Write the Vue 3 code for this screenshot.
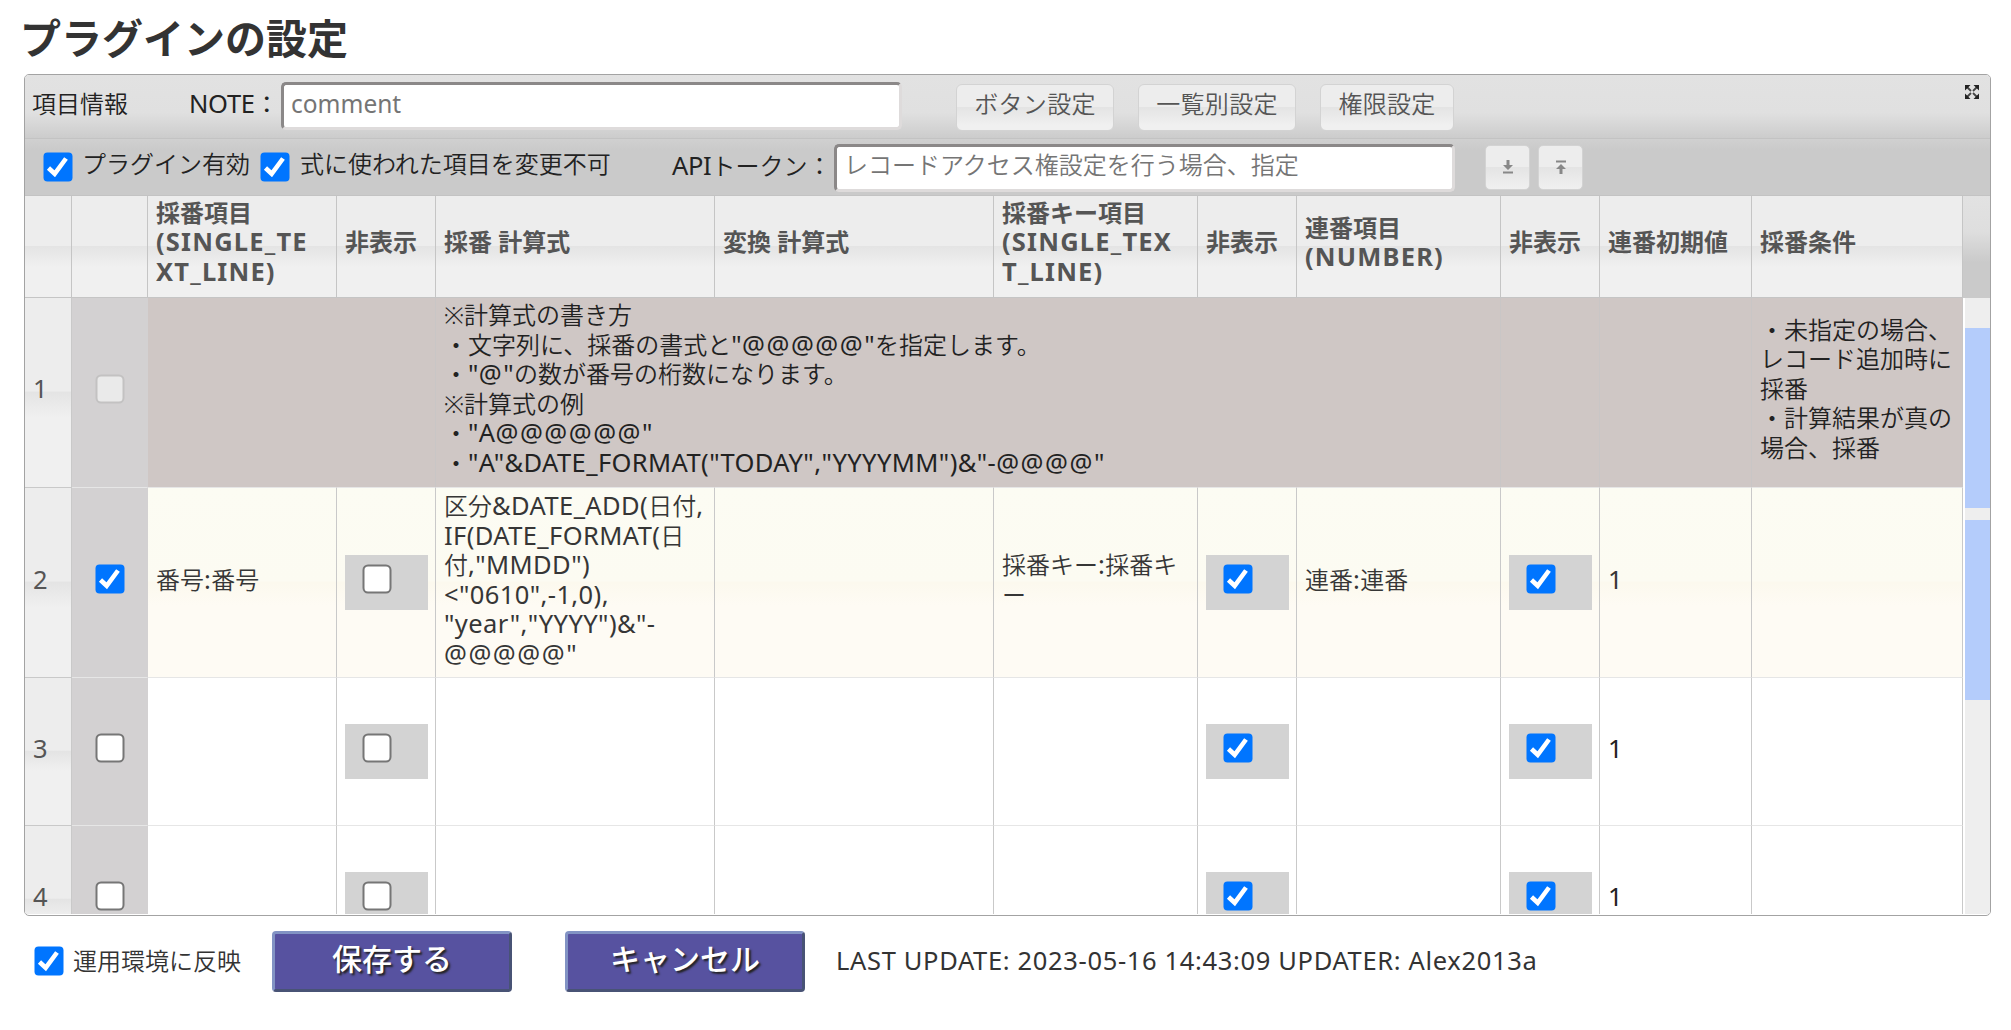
<template>
    <svg class="symbols" width="0" height="0">
        <symbol id="box-on" viewBox="0 0 30 30">
            <rect x="0.5" y="0.5" width="29" height="29" rx="4" fill="#0075ff" />
            <path d="M5.5 16 L11.7 21.800 L23 6.500" fill="none" stroke="#fff" stroke-width="4.600" />
        </symbol>
        <symbol id="box-off" viewBox="0 0 30 30">
            <rect x="1.5" y="1.5" width="27" height="27" rx="4.5" fill="#fff" stroke="#767676" stroke-width="2" />
        </symbol>
        <symbol id="box-disabled" viewBox="0 0 30 30">
            <rect x="1.5" y="1.5" width="27" height="27" rx="4.5" fill="#eaeaea" stroke="#c3c2c2" stroke-width="2" />
        </symbol>
    </svg>

    <h1 class="title">プラグインの設定</h1>

    <div class="grid">
        <div class="grid-header">
            <span class="caption">項目情報</span>
            <span class="note-label"><span class="latin">NOTE</span>：</span>
            <input v-model="note" class="field" type="text" placeholder="comment">
            <button class="btn first">ボタン設定</button>
            <button class="btn">一覧別設定</button>
            <button class="btn narrow">権限設定</button>
            <svg class="expand" viewBox="0 0 14 14">
                <path d="M2 2l4 4M12 2L8 6M2 12l4-4M12 12L8 8" stroke="#444" stroke-width="1.800" />
                <path d="M0 0h5.500L0 5.500zM14 0v5.500L8.500 0zM0 14V8.500l5.500 5.500zM14 14H8.500l5.500-5.500z" fill="#222" />
            </svg>
        </div>

        <div class="toolbar">
            <svg class="box" @click="enabled = !enabled"><use :href="boxIcon(enabled)" /></svg>
            <span class="enabled-label">プラグイン有効</span>
            <svg class="box" @click="locked = !locked"><use :href="boxIcon(locked)" /></svg>
            <span class="locked-label">式に使われた項目を変更不可</span>
            <span class="token-label"><span class="latin">API</span>トークン：</span>
            <input v-model="token" class="field" type="text" placeholder="レコードアクセス権設定を行う場合、指定">
            <button class="icon-btn first">
                <svg viewBox="0 0 12 14" fill="#888"><path d="M4.500 0h3v5h3.500L6 10 1 5h3.500zM1 11.500h10v2H1z" /></svg>
            </button>
            <button class="icon-btn">
                <svg viewBox="0 0 12 14" fill="#888"><path d="M1 .5h10v2H1zM6 4l5 5H7.500v5h-3V9H1z" /></svg>
            </button>
        </div>

        <div class="head">
            <div v-for="(col, i) in columns" :key="i" class="th">
                <div v-for="(line, n) in col.split('\n')" :key="n" class="line">
                    <span v-for="(run, j) in split(line)" :key="j" :class="run.type">{{ run.text }}</span>
                </div>
            </div>
            <div class="head-end"></div>
        </div>

        <div class="body">
            <div class="rows">
                <div v-for="row in rows" :key="row.no" class="row" :class="row.kind">
                    <div class="td number"><span class="latin">{{ row.no }}</span></div>
                    <div class="td state"><svg class="box" @click="toggle(row)"><use :href="boxIcon(row.on)" /></svg></div>
                    <template v-for="(cell, i) in row.cells" :key="i">
                        <div v-if="typeof cell === 'boolean'" class="td check">
                            <div class="check-bg">
                                <svg class="box" @click="row.cells[i] = !cell"><use :href="boxIcon(cell)" /></svg>
                            </div>
                        </div>
                        <div v-else class="td">
                            <div v-for="(line, n) in cell.split('\n')" :key="n" class="line">
                                <span v-for="(run, j) in split(line)" :key="j" :class="run.type">{{ run.text }}</span>
                            </div>
                        </div>
                    </template>
                </div>
            </div>
            <div class="scrollbar">
                <div class="thumb"></div>
                <div class="thumb"></div>
            </div>
        </div>
    </div>

    <div class="footer">
        <svg class="box" @click="deploy = !deploy"><use :href="boxIcon(deploy)" /></svg>
        <span class="deploy-label">運用環境に反映</span>
        <button class="action">保存する</button>
        <button class="action">キャンセル</button>
        <span class="updated">LAST UPDATE: 2023-05-16 14:43:09 UPDATER: Alex2013a</span>
    </div>
</template>

<script setup>
import { ref } from 'vue';

const note = ref('');
const token = ref('');
const enabled = ref(true);
const locked = ref(true);
const deploy = ref(true);

const columns = [
    '',
    '',
    '採番項目\n(SINGLE_TE\nXT_LINE)',
    '非表示',
    '採番 計算式',
    '変換 計算式',
    '採番キー項目\n(SINGLE_TEX\nT_LINE)',
    '非表示',
    '連番項目\n(NUMBER)',
    '非表示',
    '連番初期値',
    '採番条件'
];

const help = '※計算式の書き方\n・文字列に、採番の書式と"@@@@@"を指定します。\n・"@"の数が番号の桁数になります。\n※計算式の例\n・"A@@@@@@"\n・"A"&DATE_FORMAT("TODAY","YYYYMM")&"-@@@@"';
const condition = '・未指定の場合、\nレコード追加時に\n採番\n・計算結果が真の\n場合、採番';
const formula = '区分&DATE_ADD(日付,\nIF(DATE_FORMAT(日\n付,"MMDD")\n<"0610",-1,0),\n"year","YYYY")&"-\n@@@@@"';

const rows = ref([
    { no: 1, kind: 'help', on: null, cells: ['', '', help, '', '', '', '', '', '', condition] },
    { no: 2, kind: 'active', on: true, cells: ['番号:番号', false, formula, '', '採番キー:採番キ\nー', true, '連番:連番', true, '1', ''] },
    { no: 3, kind: 'empty', on: false, cells: ['', false, '', '', '', true, '', true, '1', ''] },
    { no: 4, kind: 'empty', on: false, cells: ['', false, '', '', '', true, '', true, '1', ''] }
]);

// latin runs and "@" are set wider than the japanese text
const split = (text) => {
    return (text.match(/@+|[!-?A-~]+|[^!-~]+/g) || []).map((run) => ({
        text: run,
        type: run[0] === '@' ? 'at' : /^[!-~]/.test(run) ? 'latin' : 'kana'
    }));
};

const boxIcon = (value) => {
    if (value === null) return '#box-disabled';
    return value ? '#box-on' : '#box-off';
};

const toggle = (row) => {
    if (row.on !== null) row.on = !row.on;
};
</script>

<style>
body {
    background: #fff;
    overflow: hidden;
}
#app {
    font-family: "Noto Sans", "Noto Sans CJK JP", sans-serif;
    font-size: 24px;
    color: #333;
}
</style>

<style scoped>
.symbols {
    display: block;
}

.title {
    margin: 0;
    height: 74px;
    padding-left: 20px;
    box-sizing: border-box;
    font-size: 41px;
    font-weight: 700;
    line-height: 76px;
    white-space: nowrap;
}

.box {
    width: 30px;
    height: 30px;
    flex: none;
    display: block;
}

.latin,
.at {
    font-size: 25.5px;
    font-weight: 400;
    line-height: 1;
    letter-spacing: 0.4px;
}

.at {
    letter-spacing: 1.5px;
}

.grid {
    width: 1967px;
    height: 842px;
    margin-left: 24px;
    box-sizing: border-box;
    border: 1px solid #a3a3a3;
    border-radius: 5px;
    overflow: hidden;
    display: flex;
    flex-direction: column;
    color: #222;
    white-space: nowrap;
}

.grid-header,
.toolbar {
    display: flex;
    align-items: center;
    box-sizing: border-box;
    flex: none;
    line-height: 30px;
}

.grid-header {
    height: 64px;
    padding-left: 7px;
    border-bottom: 1px solid #c3c3c3;
    background: linear-gradient(#e2e2e2 0%, #e0e0e0 60%, #cccccc 100%);
}

.toolbar {
    height: 57px;
    padding-left: 18px;
    border-bottom: 1px solid #c3c3c3;
    background: linear-gradient(#d0d0d0 0, #cacaca 20%, #cacaca 100%);
}

.caption {
    width: 157px;
    padding-bottom: 6px;
    font-weight: 350;
}

.note-label {
    width: 92px;
    padding-bottom: 6px;
}

.note-label .latin,
.token-label .latin {
    letter-spacing: -0.3px;
}

.field {
    width: 621px;
    height: 48px;
    box-sizing: border-box;
    padding: 0 7px 6px;
    border: 3px solid;
    border-color: #8b8888 #dedbdb #dedbdb #8b8888;
    border-radius: 5px;
    background: #fff;
    font: inherit;
    font-size: 24.5px;
    outline: none;
}

.field::placeholder {
    color: #757575;
}

.grid-header .field {
    margin-bottom: 1px;
}

.toolbar .field {
    margin-top: 1px;
    font-size: 24px;
    font-weight: 350;
}

.btn {
    width: 158px;
    height: 47px;
    margin: 1px 24px 0 0;
    padding: 0 0 6px;
    box-sizing: border-box;
    border: 1px solid #d3d3d3;
    border-radius: 6px;
    background: linear-gradient(#ededed 0%, #ededed 49%, #e4e4e4 50%, #f0f0f0 90%);
    font: inherit;
    font-weight: 350;
    color: #555;
    letter-spacing: 0.3px;
}

.btn.first {
    margin-left: 54px;
}

.btn.narrow {
    width: 134px;
}

.expand {
    width: 14px;
    height: 14px;
    margin: 0 11px 30px auto;
}

.enabled-label {
    width: 187px;
    padding: 0 0 7px 9px;
    box-sizing: border-box;
    font-weight: 350;
}

.locked-label {
    width: 382px;
    padding: 0 0 7px 10px;
    box-sizing: border-box;
    font-weight: 350;
}

.token-label {
    width: 162px;
    padding-bottom: 3px;
    font-weight: 350;
}

.icon-btn {
    width: 45px;
    height: 45px;
    margin: 0 8px 0 0;
    padding: 0;
    border: 1px solid #d3d3d3;
    border-radius: 5px;
    background: linear-gradient(#ededed 0%, #ededed 49%, #e4e4e4 50%, #f0f0f0 100%);
    display: flex;
    align-items: center;
    justify-content: center;
}

.icon-btn.first {
    margin-left: 30px;
}

.icon-btn svg {
    width: 12px;
    height: 14px;
}

.head,
.row {
    display: grid;
    grid-template-columns: 47px 76px 189px 99px 279px 279px 204px 99px 204px 99px 152px 211px 1fr;
}

.head {
    flex: none;
    height: 102px;
}

.line {
    height: 29.5px;
    line-height: 29.5px;
    white-space: pre;
}

.th {
    display: flex;
    flex-direction: column;
    justify-content: center;
    padding: 0 8px 9px 8px;
    border-right: 1px solid #c5c5c5;
    border-bottom: 1px solid #c5c5c5;
    background: linear-gradient(#ededed 0%, #ededed 49%, #e4e4e4 50%, #f0f0f0 70%);
    color: #555;
    font-weight: 700;
}

.th .latin {
    font-weight: 700;
    letter-spacing: 1.2px;
}

.head-end {
    background: linear-gradient(#e2e2e2 0%, #dedede 35%, #cacaca 65%);
}

.body {
    display: flex;
    flex: 1;
    min-height: 0;
    padding-bottom: 1px;
}

.rows {
    width: 1938px;
    height: 616px;
    overflow: hidden;
}

.row {
    grid-template-columns: 47px 76px 189px 99px 279px 279px 204px 99px 204px 99px 152px 211px;
}

.help,
.active {
    height: 190px;
}

.empty {
    height: 148px;
}

.td {
    display: flex;
    flex-direction: column;
    justify-content: center;
    min-width: 0;
    padding: 0 0 6px 8px;
    border-right: 1px solid #c9c9c9;
    border-bottom: 1px solid #e6e6e6;
    font-weight: 350;
}

.help .td {
    padding-bottom: 8px;
    border-right-color: #cfc7c5;
    background: #cfc7c5;
}

.help .td:nth-child(n+9),
.help .td:nth-child(4) {
    border-right-color: #c9c6c6;
}

/* the long help text runs over the neighbouring cells */
.help .line {
    position: relative;
    z-index: 1;
}

.active .td {
    background: linear-gradient(#fcfcf3 0%, #fcfbf2 49%, #fcf9ee 50%, #fefbf4 62%, #fefbf4 100%);
    color: #363636;
}

.row .number {
    border-color: #c9c9c9;
    background: linear-gradient(#ededed 0%, #ededed 49%, #e4e4e4 50%, #f0f0f0 63%);
    color: #555;
}

.row .state {
    align-items: center;
    padding: 0 0 8px;
    background: #d3d1d2;
    border-right-color: #d3d1d2;
}

.check {
    padding: 0 7px 0 8px;
}

.check-bg {
    height: 55px;
    padding: 9px 0 0 17px;
    box-sizing: border-box;
    background: #d3d3d3;
}

.scrollbar {
    width: 25px;
    margin-left: 2px;
    padding-top: 30px;
    box-sizing: border-box;
    background: #eee;
    display: flex;
    flex-direction: column;
    gap: 12px;
}

.thumb {
    height: 180px;
    background: #b4ccfb;
}

.footer {
    display: flex;
    align-items: center;
    height: 90px;
    padding: 0 0 0 34px;
    white-space: nowrap;
}

.deploy-label {
    width: 208px;
    padding: 0 0 3px 9px;
    box-sizing: border-box;
    font-weight: 350;
}

.action {
    width: 240px;
    height: 61px;
    margin-right: 53px;
    padding: 0 0 8px;
    border: 3px solid;
    border-color: #8293c4 #485375 #485375 #8293c4;
    border-radius: 4px;
    background: #5752a0;
    color: #fff;
    font: inherit;
    font-size: 30px;
    font-weight: 500;
    text-shadow: 2px 2px 2px #222;
}

.updated {
    margin-left: -22px;
    padding-bottom: 2px;
    font-size: 25.5px;
    letter-spacing: 0.66px;
}
</style>
